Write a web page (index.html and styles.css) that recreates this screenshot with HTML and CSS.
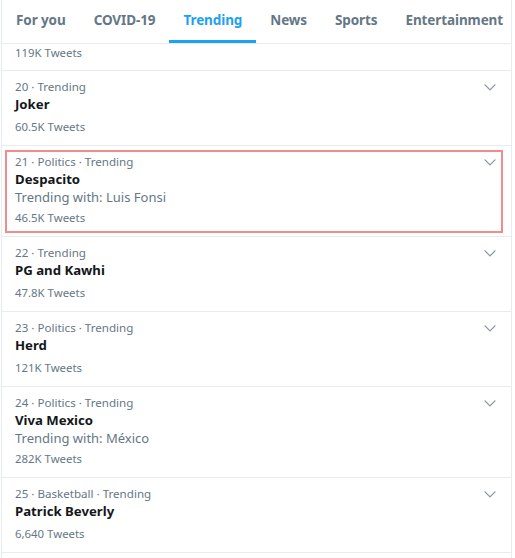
FILE: index.html
```html
<!DOCTYPE html>
<html>
<head>
<meta charset="utf-8">
<link rel="stylesheet" href="styles.css">
</head>
<body>
<div class="panel">
  <nav class="tabs">
    <div class="tab">For you</div>
    <div class="tab">COVID-19</div>
    <div class="tab active">Trending</div>
    <div class="tab">News</div>
    <div class="tab">Sports</div>
    <div class="tab">Entertainment</div>
  </nav>
  <div class="row partial">
    <div class="count">119K Tweets</div>
  </div>
  <div class="row">
    <div class="meta">20 · Trending</div>
    <div class="title">Joker</div>
    <div class="count">60.5K Tweets</div>
    <svg class="chev" viewBox="0 0 24 24"><path d="M20.207 8.147c-.39-.39-1.023-.39-1.414 0L12 14.940 5.207 8.147c-.39-.39-1.023-.39-1.414 0-.39.39-.39 1.023 0 1.414l7.5 7.5c.195.196.45.294.707.294s.512-.098.707-.293l7.5-7.5c.39-.39.39-1.022 0-1.413z"/></svg>
  </div>
  <div class="row">
    <div class="meta">21 · Politics · Trending</div>
    <div class="title">Despacito</div>
    <div class="sub">Trending with: Luis Fonsi</div>
    <div class="count">46.5K Tweets</div>
    <svg class="chev" viewBox="0 0 24 24"><path d="M20.207 8.147c-.39-.39-1.023-.39-1.414 0L12 14.940 5.207 8.147c-.39-.39-1.023-.39-1.414 0-.39.39-.39 1.023 0 1.414l7.5 7.5c.195.196.45.294.707.294s.512-.098.707-.293l7.5-7.5c.39-.39.39-1.022 0-1.413z"/></svg>
    <div class="highlight"></div>
  </div>
  <div class="row">
    <div class="meta">22 · Trending</div>
    <div class="title">PG and Kawhi</div>
    <div class="count">47.8K Tweets</div>
    <svg class="chev" viewBox="0 0 24 24"><path d="M20.207 8.147c-.39-.39-1.023-.39-1.414 0L12 14.940 5.207 8.147c-.39-.39-1.023-.39-1.414 0-.39.39-.39 1.023 0 1.414l7.5 7.5c.195.196.45.294.707.294s.512-.098.707-.293l7.5-7.5c.39-.39.39-1.022 0-1.413z"/></svg>
  </div>
  <div class="row">
    <div class="meta">23 · Politics · Trending</div>
    <div class="title">Herd</div>
    <div class="count">121K Tweets</div>
    <svg class="chev" viewBox="0 0 24 24"><path d="M20.207 8.147c-.39-.39-1.023-.39-1.414 0L12 14.940 5.207 8.147c-.39-.39-1.023-.39-1.414 0-.39.39-.39 1.023 0 1.414l7.5 7.5c.195.196.45.294.707.294s.512-.098.707-.293l7.5-7.5c.39-.39.39-1.022 0-1.413z"/></svg>
  </div>
  <div class="row">
    <div class="meta">24 · Politics · Trending</div>
    <div class="title">Viva Mexico</div>
    <div class="sub">Trending with: México</div>
    <div class="count">282K Tweets</div>
    <svg class="chev" viewBox="0 0 24 24"><path d="M20.207 8.147c-.39-.39-1.023-.39-1.414 0L12 14.940 5.207 8.147c-.39-.39-1.023-.39-1.414 0-.39.39-.39 1.023 0 1.414l7.5 7.5c.195.196.45.294.707.294s.512-.098.707-.293l7.5-7.5c.39-.39.39-1.022 0-1.413z"/></svg>
  </div>
  <div class="row">
    <div class="meta">25 · Basketball · Trending</div>
    <div class="title">Patrick Beverly</div>
    <div class="count">6,640 Tweets</div>
    <svg class="chev" viewBox="0 0 24 24"><path d="M20.207 8.147c-.39-.39-1.023-.39-1.414 0L12 14.940 5.207 8.147c-.39-.39-1.023-.39-1.414 0-.39.39-.39 1.023 0 1.414l7.5 7.5c.195.196.45.294.707.294s.512-.098.707-.293l7.5-7.5c.39-.39.39-1.022 0-1.413z"/></svg>
  </div>
</div>
</body>
</html>
```

FILE: styles.css
```css
html, body {
  margin: 0;
  padding: 0;
  background: #ffffff;
}
body {
  font-family: "Noto Sans", "Open Sans", sans-serif;
  color: #14171a;
  overflow: hidden;
}
.panel {
  margin-left: 1px;
  width: 509px;
  border-left: 1px solid #e6ecf0;
  border-right: 1px solid #e6ecf0;
  min-height: 558px;
}
.tabs {
  display: flex;
  height: 43px;
  border-bottom: 1px solid #e6ecf0;
}
.tab {
  padding: 0 14px;
  font-size: 13.5px;
  font-weight: 700;
  letter-spacing: -0.1px;
  color: #657786;
  line-height: 40px;
  border-bottom: 3px solid transparent;
  white-space: nowrap;
}
.tab.active {
  color: #1da1f2;
  border-bottom-color: #1da1f2;
}
.row {
  position: relative;
  padding: 7px 13px 9px;
  border-bottom: 1px solid #e6ecf0;
}
.row.partial {
  padding-top: 0;
  padding-bottom: 8px;
}
.meta {
  font-size: 11.6px;
  line-height: 17px;
  color: #657786;
}
.count {
  font-size: 11.4px;
  line-height: 18px;
  color: #657786;
  margin-top: 5px;
}
.partial .count {
  margin-top: 0;
}
.title {
  font-size: 13.2px;
  font-weight: 700;
  line-height: 18px;
  color: #14171a;
}
.sub {
  font-size: 13px;
  line-height: 18px;
  margin-bottom: -2px;
  color: #657786;
}
.chev {
  position: absolute;
  top: 8px;
  right: 13px;
  width: 16px;
  height: 16px;
  fill: #8899a6;
}
.highlight {
  position: absolute;
  top: 4px;
  left: 3px;
  right: 8px;
  bottom: 3px;
  border: 2px solid #f28b8b;
  pointer-events: none;
}
```
